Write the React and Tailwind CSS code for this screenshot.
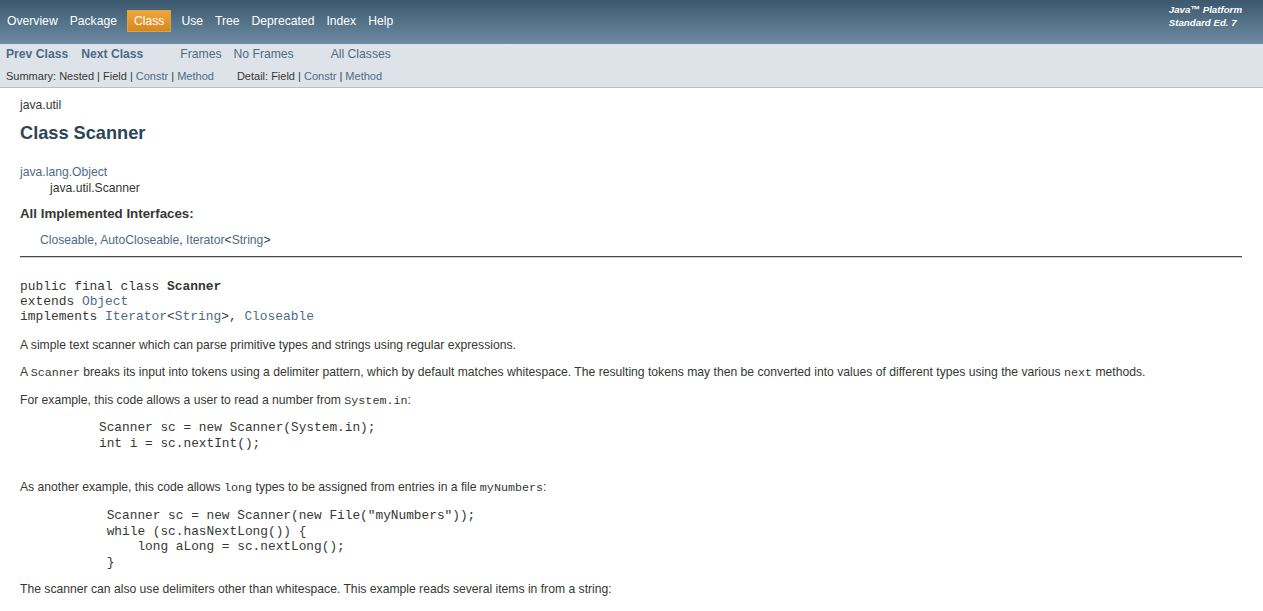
import React from 'react';

const sans = "font-['Liberation_Sans',Arial,Helvetica,sans-serif]";
const mono = "font-['Liberation_Mono','Courier_New',monospace]";

const topItems = ['Overview', 'Package', 'Class', 'Use', 'Tree', 'Deprecated', 'Index', 'Help'];

const Code = ({ children }) => (
  <code className={`${mono} text-[11.7px] leading-none`}>{children}</code>
);

const Link = ({ children, className = '' }) => (
  <a href="#" className={`text-[#4c6b87] no-underline ${className}`}>{children}</a>
);

const App = () => {
  return (
    <div className={`${sans} min-h-screen bg-white text-[#353833] text-[12.16px]`}>
      {/* top navigation */}
      <div className="h-[44px] flex justify-between bg-linear-to-b from-[#3b586d] to-[#6d8ca3] text-white">
        <ul className="flex items-start pl-[1px] mt-[10px]">
          {topItems.map(item =>
            item === 'Class' ? (
              <li
                key={item}
                className="mx-[4px] px-[6px] py-[3px] leading-[14px] border border-[#cfa944] bg-linear-to-b from-[#f2a53c] to-[#d9871f]"
              >
                {item}
              </li>
            ) : (
              <li key={item} className="px-[6px] py-[4px] leading-[14px]">
                {item}
              </li>
            )
          )}
        </ul>
        <div className="pr-[21px] mt-[3px] text-[9.7px] leading-[13px] font-bold italic">
          <div>Java™ Platform</div>
          <div>Standard Ed. 7</div>
        </div>
      </div>

      {/* sub navigation */}
      <div className="h-[44px] bg-[#dee3e9] border-b border-[#b4c0cf]">
        <div className="flex pl-[6px] pt-[3px] leading-[14px]">
          <Link className="font-bold">Prev Class</Link>
          <Link className="font-bold ml-[13px]">Next Class</Link>
          <Link className="ml-[37px]">Frames</Link>
          <Link className="ml-[12px]">No Frames</Link>
          <Link className="ml-[37px]">All Classes</Link>
        </div>
        <div className="flex pl-[6px] mt-[8.5px] text-[11px] leading-[13px]">
          <div>
            Summary:&nbsp;Nested&nbsp;|&nbsp;Field&nbsp;|&nbsp;<Link>Constr</Link>&nbsp;|&nbsp;<Link>Method</Link>
          </div>
          <div className="ml-[23px]">
            Detail:&nbsp;Field&nbsp;|&nbsp;<Link>Constr</Link>&nbsp;|&nbsp;<Link>Method</Link>
          </div>
        </div>
      </div>

      {/* header */}
      <div className="pl-[20px] pr-[21px] pt-[10px] pb-[16px]">
        <div className="leading-[14px]">java.util</div>
        <h2 className="mt-[10.5px] text-[18.2px] leading-[21px] font-bold text-[#2c4557]">Class Scanner</h2>
        <div className="mt-[20px] leading-[16px]">
          <Link>java.lang.Object</Link>
        </div>
        <div className="pl-[30px] leading-[16px]">java.util.Scanner</div>
        <div className="mt-[10px] text-[13.3px] leading-[16px] font-bold">All Implemented Interfaces:</div>
        <div className="mt-[11px] pl-[20px] leading-[14px]">
          <Link>Closeable</Link>, <Link>AutoCloseable</Link>, <Link>Iterator</Link>&lt;<Link>String</Link>&gt;
        </div>
        <div className="mt-[9px] border-t border-[#4b4b4b] border-b border-b-[#cfcfcf]" />

        {/* class signature */}
        <pre className={`${mono} mt-[21px] text-[12.9px] leading-[15px]`}>
          public final class <b>Scanner</b>
          {'\n'}extends <Link>Object</Link>
          {'\n'}implements <Link>Iterator</Link>&lt;<Link>String</Link>&gt;, <Link>Closeable</Link>
        </pre>

        <p className="mt-[14.5px] leading-[14px]">
          A simple text scanner which can parse primitive types and strings using regular expressions.
        </p>
        <p className="mt-[13px] leading-[14px]">
          A <Code>Scanner</Code> breaks its input into tokens using a delimiter pattern, which by default matches
          whitespace. The resulting tokens may then be converted into values of different types using the various{' '}
          <Code>next</Code> methods.
        </p>
        <p className="mt-[13px] leading-[14px]">
          For example, this code allows a user to read a number from <Code>System.in</Code>:
        </p>
        <pre className={`${mono} mt-[13px] ml-[79px] text-[12.8px] leading-[16px]`}>
          {'Scanner sc = new Scanner(System.in);\nint i = sc.nextInt();'}
        </pre>

        <p className="mt-[28px] leading-[14px]">
          As another example, this code allows <Code>long</Code> types to be assigned from entries in a file{' '}
          <Code>myNumbers</Code>:
        </p>
        <pre className={`${mono} mt-[13px] ml-[79px] text-[12.8px] leading-[15.5px]`}>
          {' Scanner sc = new Scanner(new File("myNumbers"));\n while (sc.hasNextLong()) {\n     long aLong = sc.nextLong();\n }'}
        </pre>

        <p className="mt-[12px] leading-[14px]">
          The scanner can also use delimiters other than whitespace. This example reads several items in from a string:
        </p>
      </div>
    </div>
  );
};

export default App;
